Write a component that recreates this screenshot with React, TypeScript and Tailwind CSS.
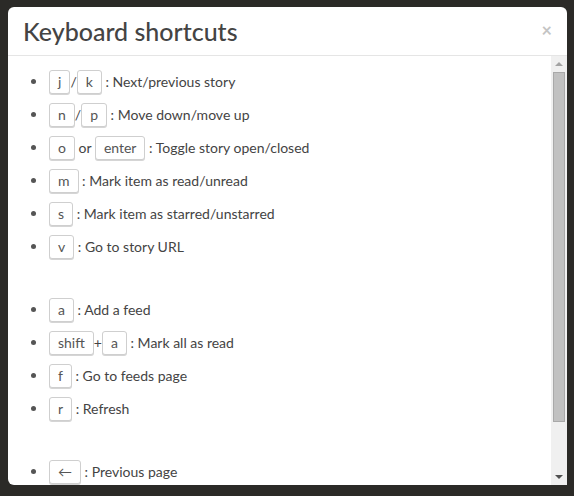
import React from 'react';

const Key: React.FC<{ children: React.ReactNode }> = ({ children }) => (
  <kbd className="inline-block rounded-[3px] border border-[#cfcfcf] bg-white px-2 py-px font-['Lato',sans-serif] text-[14px] leading-5 text-[#555] shadow-[0_1px_0_#d5d5d5]">
    {children}
  </kbd>
);

const Row: React.FC<{ children: React.ReactNode }> = ({ children }) => (
  <li className="flex h-[33px] items-center">
    <span className="mr-[13px] ml-[6px] h-[5px] w-[5px] rounded-full bg-[#555]" />
    <span className="whitespace-pre">{children}</span>
  </li>
);

const App: React.FC = () => {
  return (
    <div className="h-[496px] w-[574px] overflow-hidden bg-[#2b2a27] pt-[7px] pl-[8px] font-['Lato',sans-serif]">
      <div className="flex h-[478px] w-[559px] flex-col overflow-hidden rounded-[6px] rounded-br-none bg-white">
        {/* Header */}
        <div className="flex h-[49px] shrink-0 items-center justify-between border-b border-[#e5e5e5] pr-[15px] pl-[15px]">
          <h4 className="text-[25px] leading-none font-medium text-[#444]">Keyboard shortcuts</h4>
          <span className="-mt-[2px] text-[18px] font-bold leading-none text-[#c4c4c4]">×</span>
        </div>

        {/* Body */}
        <div className="flex min-h-0 flex-1">
          <div className="min-w-0 flex-1 overflow-hidden pt-[9px] pl-[17px] text-[14px] text-[#444]">
            <ul>
              <Row>
                <Key>j</Key>/<Key>k</Key> : Next/previous story
              </Row>
              <Row>
                <Key>n</Key>/<Key>p</Key> : Move down/move up
              </Row>
              <Row>
                <Key>o</Key> or <Key>enter</Key> : Toggle story open/closed
              </Row>
              <Row>
                <Key>m</Key> : Mark item as read/unread
              </Row>
              <Row>
                <Key>s</Key> : Mark item as starred/unstarred
              </Row>
              <Row>
                <Key>v</Key> : Go to story URL
              </Row>
            </ul>
            <ul className="mt-[30px]">
              <Row>
                <Key>a</Key> : Add a feed
              </Row>
              <Row>
                <Key>shift</Key>+<Key>a</Key> : Mark all as read
              </Row>
              <Row>
                <Key>f</Key> : Go to feeds page
              </Row>
              <Row>
                <Key>r</Key> : Refresh
              </Row>
            </ul>
            <ul className="mt-[30px]">
              <Row>
                <Key>←</Key> : Previous page
              </Row>
            </ul>
          </div>

          {/* Scrollbar */}
          <div className="flex w-[16px] shrink-0 flex-col items-center bg-[#f0f0f0]">
            <div className="flex h-[16px] w-full items-center justify-center">
              <span className="h-0 w-0 border-x-[4px] border-b-[4px] border-x-transparent border-b-[#a3a3a3]" />
            </div>
            <div className="h-[350px] w-[12px] border border-[#a9a9a9] bg-[#c1c1c1]" />
            <div className="flex-1" />
            <div className="flex h-[16px] w-full items-center justify-center">
              <span className="h-0 w-0 border-x-[4px] border-t-[4px] border-x-transparent border-t-[#505050]" />
            </div>
          </div>
        </div>
      </div>
    </div>
  );
};

export default App;
